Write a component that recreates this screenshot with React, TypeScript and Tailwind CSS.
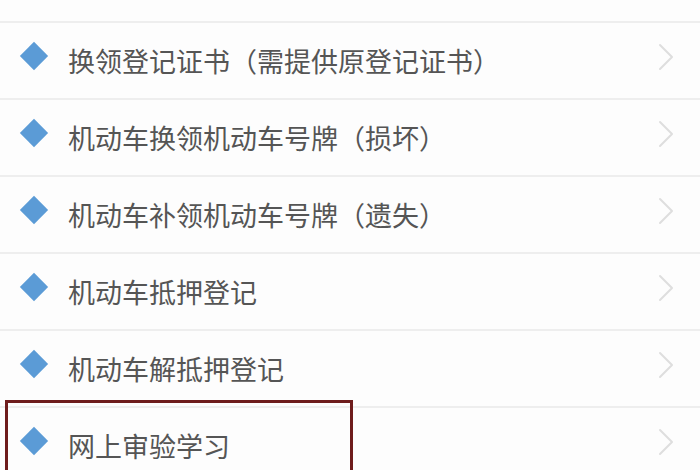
import React from 'react';

const items = [
  '补领登记证书',
  '换领登记证书（需提供原登记证书）',
  '机动车换领机动车号牌（损坏）',
  '机动车补领机动车号牌（遗失）',
  '机动车抵押登记',
  '机动车解抵押登记',
  '网上审验学习',
];

const Chevron = () => (
  <svg width="16" height="28" viewBox="0 0 16 28" fill="none" className="mb-[8px]">
    <polyline points="2,2 14,14 2,26" stroke="#dedede" strokeWidth="2" strokeLinecap="round" strokeLinejoin="round" />
  </svg>
);

const Row: React.FC<{ label: string; highlight?: boolean; first?: boolean }> = ({ label, highlight, first }) => (
  <div
    className={`relative flex items-center h-[77px] border-b-2 border-[#eeeeee] ${first ? '-mt-[54px]' : ''}`}
  >
    <div className="ml-[20px] w-[28px] h-[28px] flex items-center justify-center mb-[10px]">
      <div className="w-[20px] h-[20px] rotate-45 bg-[#5b9bd6]" />
    </div>
    <span className="ml-[20px] flex-1 text-[27px] leading-none text-[#555555] tracking-normal">{label}</span>
    <div className="mr-[26px] flex items-center">
      <Chevron />
    </div>
    {highlight && (
      <div className="absolute left-[5px] top-[-8px] w-[348px] h-[100px] border-[3px] border-[#6e1c1c]" />
    )}
  </div>
);

export default function App() {
  return (
    <div
      className="w-[700px] h-[470px] overflow-hidden bg-[#fdfdfd]"
      style={{ fontFamily: '"Noto Sans CJK SC", "Noto Sans", sans-serif' }}
    >
      {items.map((label, i) => (
        <Row key={i} label={label} first={i === 0} highlight={i === items.length - 1} />
      ))}
    </div>
  );
}
